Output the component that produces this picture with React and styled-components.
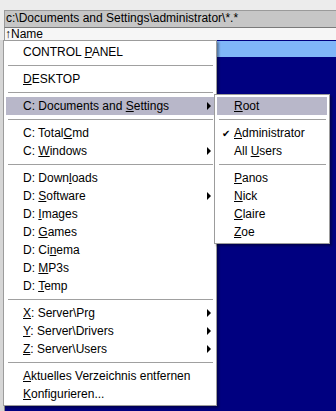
import React from "react";
import styled, { createGlobalStyle } from "styled-components";

const GlobalStyle = createGlobalStyle`
  html, body { margin: 0; padding: 0; background: #ececec; }
  body { font-family: Tahoma, "Liberation Sans", Arial, sans-serif; font-size: 12px; color: #000; }
`;

const mainItems = [
  { label: "CONTROL PANEL", key: "P" },
  "sep",
  { label: "DESKTOP", key: "D" },
  "sep",
  { label: "C: Documents and Settings", key: "S", sub: true, active: true },
  "sep",
  { label: "C: TotalCmd", key: "C", from: 3 },
  { label: "C: Windows", key: "W", sub: true },
  "sep",
  { label: "D: Downloads", key: "l" },
  { label: "D: Software", key: "S", sub: true },
  { label: "D: Images", key: "I" },
  { label: "D: Games", key: "G" },
  { label: "D: Cinema", key: "n" },
  { label: "D: MP3s", key: "M" },
  { label: "D: Temp", key: "T" },
  "sep",
  { label: "X: Server\\Prg", key: "X", sub: true },
  { label: "Y: Server\\Drivers", key: "Y", sub: true },
  { label: "Z: Server\\Users", key: "Z", sub: true },
  "sep",
  { label: "Aktuelles Verzeichnis entfernen", key: "A" },
  { label: "Konfigurieren...", key: "K" },
];

const subItems = [
  { label: "Root", key: "R", active: true },
  "sep",
  { label: "Administrator", key: "A", checked: true },
  { label: "All Users", key: "U" },
  "sep",
  { label: "Panos", key: "P" },
  { label: "Nick", key: "N" },
  { label: "Claire", key: "C" },
  { label: "Zoe", key: "Z" },
];

const Mnemonic = ({ label, k, from = 0 }) => {
  const i = label.indexOf(k, from);
  if (i < 0) return <Label>{label}</Label>;
  return (
    <Label>
      {label.slice(0, i)}
      <U>{label[i]}</U>
      {label.slice(i + 1)}
    </Label>
  );
};

const renderItems = (items) =>
  items.map((it, idx) =>
    it === "sep" ? (
      <Separator key={idx} />
    ) : (
      <Item key={idx} $active={it.active}>
        {it.checked && <Check>✔</Check>}
        <Mnemonic label={it.label} k={it.key} from={it.from} />
        {it.sub && <Arrow />}
      </Item>
    )
  );

export default function App() {
  return (
    <Window>
      <GlobalStyle />
      <PathBar>c:\Documents and Settings\administrator\*.*</PathBar>
      <Header>↑Name</Header>
      <Body>
        <LeftStrip />
        <Panel>
          <SelectedRow />
        </Panel>
      </Body>
      <Menu>{renderItems(mainItems)}</Menu>
      <SubMenu>{renderItems(subItems)}</SubMenu>
    </Window>
  );
}

const Window = styled.div`
  position: relative;
  width: 336px;
  height: 411px;
  overflow: hidden;
  background: #ececec;
  display: flex;
  flex-direction: column;
  padding-top: 10px;
  box-sizing: border-box;
`;

const PathBar = styled.div`
  margin-left: 4px;
  height: 17px;
  box-sizing: border-box;
  background: #c6c6c6;
  border-top: 1px solid #9a9a9a;
  border-left: 1px solid #9a9a9a;
  padding-left: 1px;
  line-height: 15px;
  white-space: nowrap;
`;

const Header = styled.div`
  margin-left: 4px;
  height: 13px;
  box-sizing: border-box;
  background: #f6f6f6;
  border-top: 1px solid #7a7a7a;
  border-left: 1px solid #9a9a9a;
  line-height: 12px;
`;

const Body = styled.div`
  flex: 1;
  display: flex;
`;

const LeftStrip = styled.div`
  width: 4px;
  background: #d6d6d6;
  border-right: 1px solid #8a8a8a;
`;

const Panel = styled.div`
  flex: 1;
  background: #000080;
`;

const SelectedRow = styled.div`
  height: 16px;
  margin-top: 1px;
  background: #80b6f8;
`;

const Menu = styled.div`
  position: absolute;
  left: 3px;
  top: 40px;
  width: 214px;
  box-sizing: border-box;
  background: #fff;
  border: 1px solid #9c9c9c;
  box-shadow: 2px 2px 2px rgba(0, 0, 0, 0.35);
  padding: 2px 2px;
`;

const SubMenu = styled(Menu)`
  left: 214px;
  top: 94px;
  width: 116px;
`;

const Item = styled.div`
  position: relative;
  height: 18px;
  display: flex;
  align-items: center;
  padding-left: 17px;
  white-space: nowrap;
  background: ${(p) => (p.$active ? "#b8b7c9" : "transparent")};
`;

const Label = styled.span`
  white-space: pre;
`;

const U = styled.span`
  text-decoration: underline;
  text-underline-offset: 1px;
`;

const Separator = styled.div`
  height: 9px;
  display: flex;
  align-items: center;
  padding: 0 1px 0 2px;

  &::after {
    content: "";
    flex: 1;
    height: 1px;
    margin-top: -1px;
    background: #a0a0a0;
  }
`;

const Check = styled.span`
  position: absolute;
  left: 5px;
  font-size: 10px;
`;

const Arrow = styled.span`
  position: absolute;
  right: 3px;
  top: 5px;
  width: 0;
  height: 0;
  border-top: 4px solid transparent;
  border-bottom: 4px solid transparent;
  border-left: 4px solid #000;
`;
